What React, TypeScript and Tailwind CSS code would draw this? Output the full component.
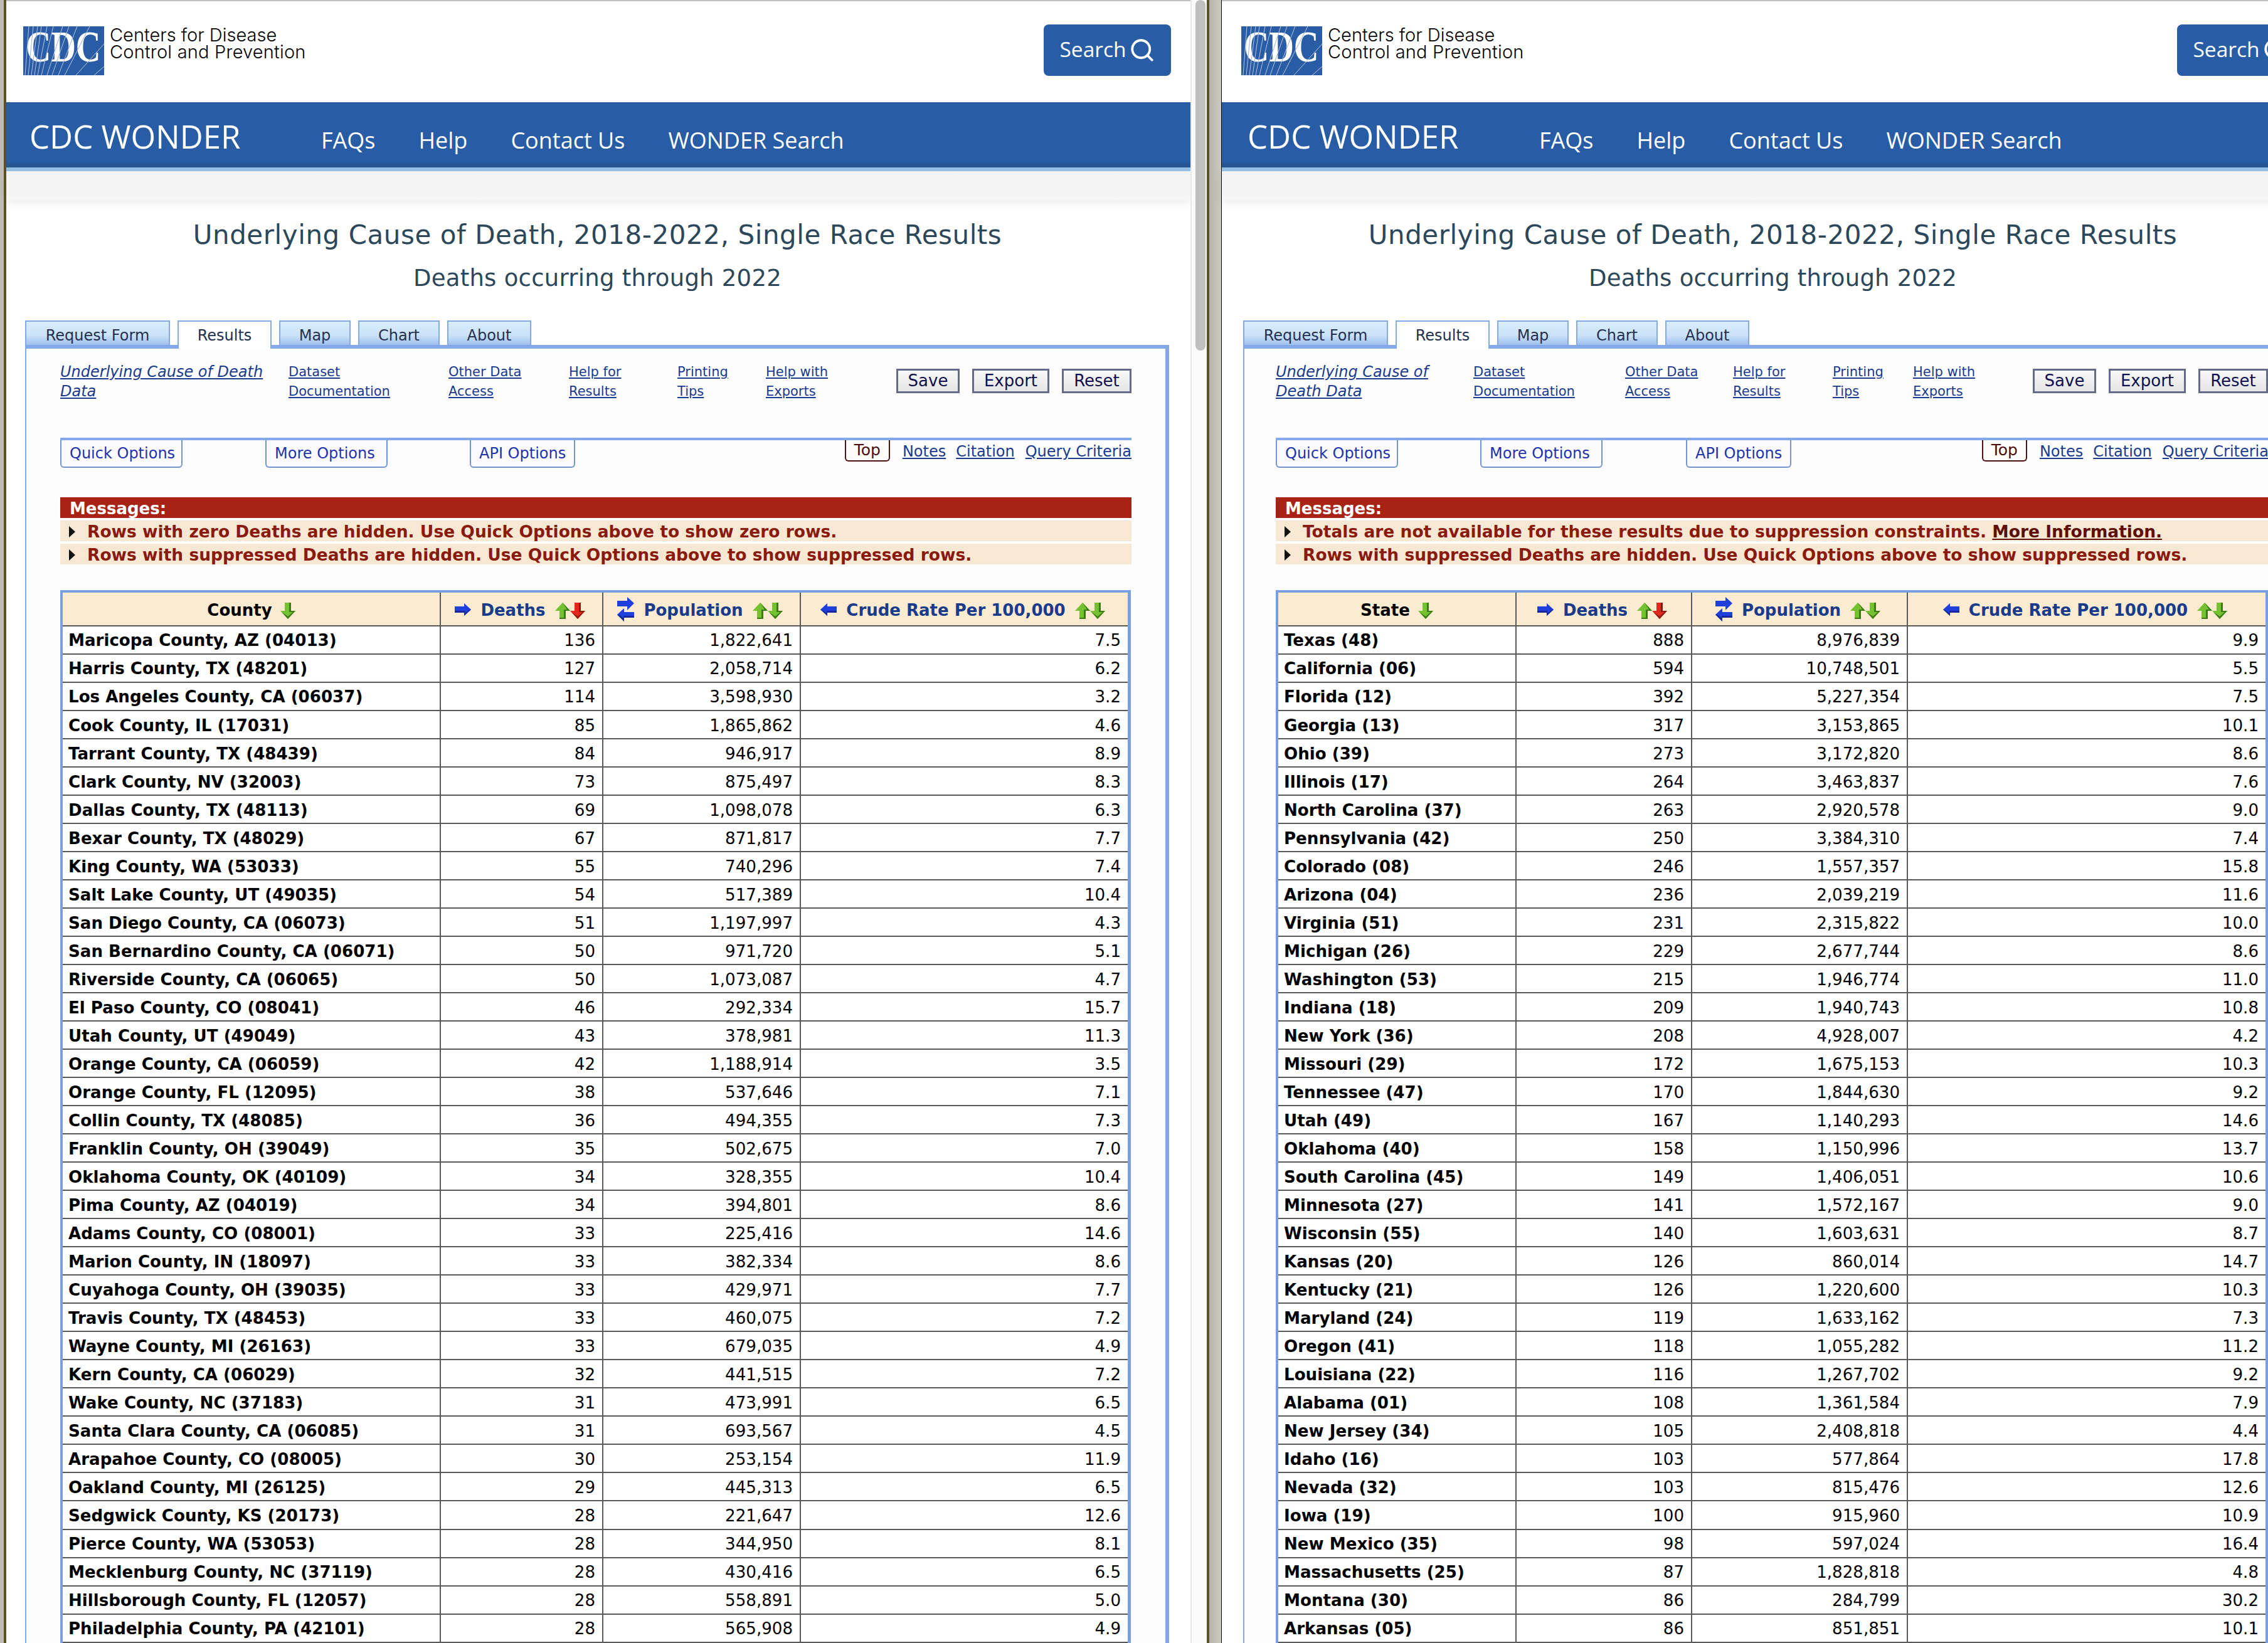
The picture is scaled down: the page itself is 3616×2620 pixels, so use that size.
import type { ReactNode } from 'react'
import { Search } from 'lucide-react'

type Cells = [string, string, string, string]

const countyRows: Cells[] = [
  ['Maricopa County, AZ (04013)', '136', '1,822,641', '7.5'],
  ['Harris County, TX (48201)', '127', '2,058,714', '6.2'],
  ['Los Angeles County, CA (06037)', '114', '3,598,930', '3.2'],
  ['Cook County, IL (17031)', '85', '1,865,862', '4.6'],
  ['Tarrant County, TX (48439)', '84', '946,917', '8.9'],
  ['Clark County, NV (32003)', '73', '875,497', '8.3'],
  ['Dallas County, TX (48113)', '69', '1,098,078', '6.3'],
  ['Bexar County, TX (48029)', '67', '871,817', '7.7'],
  ['King County, WA (53033)', '55', '740,296', '7.4'],
  ['Salt Lake County, UT (49035)', '54', '517,389', '10.4'],
  ['San Diego County, CA (06073)', '51', '1,197,997', '4.3'],
  ['San Bernardino County, CA (06071)', '50', '971,720', '5.1'],
  ['Riverside County, CA (06065)', '50', '1,073,087', '4.7'],
  ['El Paso County, CO (08041)', '46', '292,334', '15.7'],
  ['Utah County, UT (49049)', '43', '378,981', '11.3'],
  ['Orange County, CA (06059)', '42', '1,188,914', '3.5'],
  ['Orange County, FL (12095)', '38', '537,646', '7.1'],
  ['Collin County, TX (48085)', '36', '494,355', '7.3'],
  ['Franklin County, OH (39049)', '35', '502,675', '7.0'],
  ['Oklahoma County, OK (40109)', '34', '328,355', '10.4'],
  ['Pima County, AZ (04019)', '34', '394,801', '8.6'],
  ['Adams County, CO (08001)', '33', '225,416', '14.6'],
  ['Marion County, IN (18097)', '33', '382,334', '8.6'],
  ['Cuyahoga County, OH (39035)', '33', '429,971', '7.7'],
  ['Travis County, TX (48453)', '33', '460,075', '7.2'],
  ['Wayne County, MI (26163)', '33', '679,035', '4.9'],
  ['Kern County, CA (06029)', '32', '441,515', '7.2'],
  ['Wake County, NC (37183)', '31', '473,991', '6.5'],
  ['Santa Clara County, CA (06085)', '31', '693,567', '4.5'],
  ['Arapahoe County, CO (08005)', '30', '253,154', '11.9'],
  ['Oakland County, MI (26125)', '29', '445,313', '6.5'],
  ['Sedgwick County, KS (20173)', '28', '221,647', '12.6'],
  ['Pierce County, WA (53053)', '28', '344,950', '8.1'],
  ['Mecklenburg County, NC (37119)', '28', '430,416', '6.5'],
  ['Hillsborough County, FL (12057)', '28', '558,891', '5.0'],
  ['Philadelphia County, PA (42101)', '28', '565,908', '4.9'],
]

const stateRows: Cells[] = [
  ['Texas (48)', '888', '8,976,839', '9.9'],
  ['California (06)', '594', '10,748,501', '5.5'],
  ['Florida (12)', '392', '5,227,354', '7.5'],
  ['Georgia (13)', '317', '3,153,865', '10.1'],
  ['Ohio (39)', '273', '3,172,820', '8.6'],
  ['Illinois (17)', '264', '3,463,837', '7.6'],
  ['North Carolina (37)', '263', '2,920,578', '9.0'],
  ['Pennsylvania (42)', '250', '3,384,310', '7.4'],
  ['Colorado (08)', '246', '1,557,357', '15.8'],
  ['Arizona (04)', '236', '2,039,219', '11.6'],
  ['Virginia (51)', '231', '2,315,822', '10.0'],
  ['Michigan (26)', '229', '2,677,744', '8.6'],
  ['Washington (53)', '215', '1,946,774', '11.0'],
  ['Indiana (18)', '209', '1,940,743', '10.8'],
  ['New York (36)', '208', '4,928,007', '4.2'],
  ['Missouri (29)', '172', '1,675,153', '10.3'],
  ['Tennessee (47)', '170', '1,844,630', '9.2'],
  ['Utah (49)', '167', '1,140,293', '14.6'],
  ['Oklahoma (40)', '158', '1,150,996', '13.7'],
  ['South Carolina (45)', '149', '1,406,051', '10.6'],
  ['Minnesota (27)', '141', '1,572,167', '9.0'],
  ['Wisconsin (55)', '140', '1,603,631', '8.7'],
  ['Kansas (20)', '126', '860,014', '14.7'],
  ['Kentucky (21)', '126', '1,220,600', '10.3'],
  ['Maryland (24)', '119', '1,633,162', '7.3'],
  ['Oregon (41)', '118', '1,055,282', '11.2'],
  ['Louisiana (22)', '116', '1,267,702', '9.2'],
  ['Alabama (01)', '108', '1,361,584', '7.9'],
  ['New Jersey (34)', '105', '2,408,818', '4.4'],
  ['Idaho (16)', '103', '577,864', '17.8'],
  ['Nevada (32)', '103', '815,476', '12.6'],
  ['Iowa (19)', '100', '915,960', '10.9'],
  ['New Mexico (35)', '98', '597,024', '16.4'],
  ['Massachusetts (25)', '87', '1,828,818', '4.8'],
  ['Montana (30)', '86', '284,799', '30.2'],
  ['Arkansas (05)', '86', '851,851', '10.1'],
]

// rays of the logo, bottom edge to top or right edge
const logoRays = [
  'M3 78 L9 0', 'M8 78 L16 0', 'M13 78 L23 0', 'M18 78 L29 0', 'M23 78 L38 0', 'M29 78 L48 0',
  'M38 78 L63 0', 'M46 78 L73 0', 'M56 78 L86 0', 'M66 78 L106 0', 'M84 78 L129 28', 'M113 78 L129 64',
]

function CdcLogo({ id }: { id: string }) {
  const letters = { x: 64, y: 56, textAnchor: 'middle', fontFamily: "'Liberation Serif', serif", fontWeight: 700, fontSize: 70 } as const
  return (
    <svg width="129" height="78" viewBox="0 0 129 78" className="shrink-0">
      <defs>
        <clipPath id={id}>
          <text {...letters} textLength="119" lengthAdjust="spacingAndGlyphs">CDC</text>
        </clipPath>
      </defs>
      <rect width="129" height="78" fill="#2a5ba5" />
      {logoRays.map((d) => (
        <path key={d} d={d} stroke="#c6d5ea" strokeWidth="0.9" fill="none" />
      ))}
      <text {...letters} fill="#fff" textLength="119" lengthAdjust="spacingAndGlyphs">CDC</text>
      <g clipPath={`url(#${id})`}>
        {logoRays.map((d) => (
          <path key={d} d={d} stroke="#7f9dc9" strokeWidth="0.8" fill="none" />
        ))}
      </g>
    </svg>
  )
}

function BlueArrow({ dir }: { dir: 'left' | 'right' }) {
  return (
    <svg width="26" height="20" viewBox="0 0 26 20" className="shrink-0 mb-[3px]">
      {dir === 'right' ? (
        <>
          <polygon points="0,5 15,5 15,0 26,10 15,20 15,15 0,15" fill="#1f3fdc" />
          <polygon points="0,12 16,12 16,16 24,10 26,10 15,20 15,15 0,15" fill="#14289a" />
        </>
      ) : (
        <>
          <polygon points="26,5 11,5 11,0 0,10 11,20 11,15 26,15" fill="#1f3fdc" />
          <polygon points="26,12 10,12 10,16 2,10 0,10 11,20 11,15 26,15" fill="#14289a" />
        </>
      )}
    </svg>
  )
}

function SwapArrows() {
  return (
    <svg width="27" height="39" viewBox="0 0 27 39" className="shrink-0 mb-[3px]">
      <polygon points="0,6 16,6 16,0 27,10 16,21 16,15 0,15" fill="#1f3fdc" />
      <polygon points="27,24 11,24 11,18 0,28 11,39 11,33 27,33" fill="#1f3fdc" />
      <polygon points="27,30 10,30 10,34 3,28 0,28 11,39 11,33 27,33" fill="#14289a" />
    </svg>
  )
}

function SortArrow({ dir, red }: { dir: 'up' | 'down'; red?: boolean }) {
  const main = red ? '#e0291c' : '#74c22f'
  const dark = red ? '#8f1710' : '#3c7a16'
  return (
    <svg width="24" height="26" viewBox="0 0 24 26" className="shrink-0 mt-[2px]">
      {dir === 'up' ? (
        <>
          <polygon points="12,0 24,13 17,13 17,26 7,26 7,13 0,13" fill={main} />
          <polygon points="12,0 24,13 17,13 17,26 7,26 7,24 14,24 14,11 19,11" fill={dark} />
        </>
      ) : (
        <>
          <polygon points="7,0 17,0 17,13 24,13 12,26 0,13 7,13" fill={main} />
          <polygon points="14,0 17,0 17,13 24,13 12,26 2,15 12,22 20,15 14,15" fill={dark} />
        </>
      )}
    </svg>
  )
}

function Row({ cells, grid }: { cells: Cells; grid: string }) {
  return (
    <div className={`grid ${grid} h-[45.03px] border-b-2 border-[#595959] items-center leading-none text-[26.1px] text-black`}>
      <div className="h-full flex items-center pt-[2px] pl-[9px] font-bold whitespace-nowrap">{cells[0]}</div>
      <div className="h-full flex items-center justify-end pt-[2px] pr-[11px] border-l-2 border-[#595959]">{cells[1]}</div>
      <div className="h-full flex items-center justify-end pt-[2px] pr-[11px] border-l-2 border-[#595959]">{cells[2]}</div>
      <div className="h-full flex items-center justify-end pt-[2px] pr-[11px] border-l-2 border-[#595959]">{cells[3]}</div>
    </div>
  )
}

function DataTable({ label, rows, grid, widthClass }: { label: string; rows: Cells[]; grid: string; widthClass: string }) {
  return (
    <div className={`${widthClass} mt-[41px] border-t-4 border-l-4 border-r-[5px] border-[#7a9fe0] bg-white`}>
      <div className={`grid ${grid} h-[54px] bg-[#fbebd0] border-b-2 border-[#595959] text-[26px] font-bold leading-none text-[#1a3a8a]`}>
        <div className="flex items-center justify-center gap-[13px] pt-[4px] text-black">
          {label}
          <SortArrow dir="down" />
        </div>
        <div className="flex items-center justify-center border-l-2 border-[#595959] pt-[4px] pr-[5px]">
          <BlueArrow dir="right" />
          <span className="ml-[15px] mr-[15px]">Deaths</span>
          <SortArrow dir="up" />
          <SortArrow dir="down" red />
        </div>
        <div className="flex items-center justify-center border-l-2 border-[#595959] pt-[4px] pr-[5px]">
          <SwapArrows />
          <span className="ml-[15px] mr-[15px]">Population</span>
          <SortArrow dir="up" />
          <SortArrow dir="down" />
        </div>
        <div className="flex items-center justify-center border-l-2 border-[#595959] pt-[4px] pr-[5px]">
          <BlueArrow dir="left" />
          <span className="ml-[15px] mr-[15px]">Crude Rate Per 100,000</span>
          <SortArrow dir="up" />
          <SortArrow dir="down" />
        </div>
      </div>
      {rows.map((r) => (
        <Row key={r[0]} cells={r} grid={grid} />
      ))}
    </div>
  )
}

function Message({ children }: { children: ReactNode }) {
  return (
    <div className="h-[33px] mt-[4px] bg-[#f6e8d3] flex items-center pt-[3px] text-[26.5px] leading-none font-bold text-[#8a1a0e] whitespace-nowrap">
      <svg width="10" height="18" viewBox="0 0 10 18" className="ml-[14px] mr-[19px] shrink-0">
        <polygon points="0,0 10,9 0,18" fill="#111" />
      </svg>
      {children}
    </div>
  )
}

function LinkCol({ lines, x, italic }: { lines: string[]; x: string; italic?: boolean }) {
  return (
    <a className={`${x} block leading-[31px] text-[#1a3a8f] underline whitespace-nowrap ${italic ? 'italic text-[24px]' : 'text-[21px]'}`}>
      {lines.map((l) => (
        <div key={l}>{l}</div>
      ))}
    </a>
  )
}

function Tab({ label, width, active }: { label: string; width: string; active?: boolean }) {
  return (
    <div
      className={`${width} h-[45px] flex items-center justify-center border-2 border-b-0 border-[#84a9e8] text-[24px] text-[#24304f] ${
        active ? 'bg-white z-10' : 'bg-gradient-to-b from-[#d9edfb] via-[#cbe2f8] to-[#8fb3ea]'
      }`}
    >
      {label}
    </div>
  )
}

function TabRow({ className }: { className: string }) {
  return (
    <div className={`flex ${className} mt-[42px] gap-[12px]`}>
      <Tab label="Request Form" width="w-[231px]" />
      <Tab label="Results" width="w-[150px]" active />
      <Tab label="Map" width="w-[114px]" />
      <Tab label="Chart" width="w-[130px]" />
      <Tab label="About" width="w-[134px]" />
    </div>
  )
}

function OptionTab({ label, width }: { label: string; width: string }) {
  return (
    <div className={`${width} h-[44px] flex items-center pl-[13px] border-2 border-t-0 border-[#7494cf] rounded-b-md bg-[#fafaff] text-[24px] text-[#2233a8] whitespace-nowrap`}>
      {label}
    </div>
  )
}

function ActionButton({ label, width }: { label: string; width: string }) {
  return (
    <div className={`${width} h-[39px] flex items-center justify-center border-[3px] border-[#666a88] bg-gradient-to-b from-[#f7f7f7] to-[#e6e6e6] text-[26px] text-[#10104f]`}>
      {label}
    </div>
  )
}

function ActionButtons() {
  return (
    <div className="flex gap-[20px] mt-[10px]">
      <ActionButton label="Save" width="w-[101px]" />
      <ActionButton label="Export" width="w-[123px]" />
      <ActionButton label="Reset" width="w-[111px]" />
    </div>
  )
}

function PageLinks() {
  return (
    <div className="ml-auto flex items-start text-[24px] text-[#1a3a8f] whitespace-nowrap">
      <div className="w-[72px] h-[34px] flex items-center justify-center border-2 border-t-0 border-[#4c0f0f] rounded-b-md bg-[#fffdfa] text-[25px] text-[#4a0d0d]">Top</div>
      <a className="ml-[20px] underline">Notes</a>
      <a className="ml-[16px] underline">Citation</a>
      <a className="ml-[17px] underline">Query Criteria</a>
    </div>
  )
}

function SiteHeader({ logoPad, navPad, titlePad, logoId }: { logoPad: string; navPad: string; titlePad: string; logoId: string }) {
  return (
    <>
      <div className="h-[2px] bg-[#c0c0c0]" />
      <div className={`h-[161px] flex items-start justify-between ${logoPad} pr-[31px] bg-white`}>
        <div className="flex mt-[40px]">
          <CdcLogo id={logoId} />
          <div className="ml-[9px] text-[29px] leading-[27px] text-black font-['Inter',sans-serif] font-light whitespace-nowrap">
            <div>Centers for Disease</div>
            <div className="tracking-[0.2px]">Control and Prevention</div>
          </div>
        </div>
        <div className="mt-[37px] w-[203px] h-[82px] rounded-lg bg-[#285ca5] flex items-center justify-center gap-[4px] text-[33.5px] text-white font-['Open_Sans',sans-serif]">
          <span className="pb-[4px]">Search</span>
          <Search size={42} strokeWidth={2.2} />
        </div>
      </div>
      <div className={`h-[104px] bg-gradient-to-b from-[#285ca5] from-90% to-[#26538f] flex ${navPad} text-white font-['Open_Sans',sans-serif]`}>
        <div className="mt-[19px] text-[51px] leading-[70px] w-[465px] whitespace-nowrap">CDC WONDER</div>
        <div className="mt-[36px] flex gap-[69px] text-[36px] leading-[50px] whitespace-nowrap">
          <span>FAQs</span>
          <span>Help</span>
          <span>Contact Us</span>
          <span>WONDER Search</span>
        </div>
      </div>
      <div className="h-[6px] bg-[#96c0e4]" />
      <div className="h-[46px] bg-gradient-to-b from-[#f4f4f4] from-80% to-[#f7f7f7] shadow-[0_6px_14px_rgba(0,0,0,0.07)]" />
      <div className={`mt-[31px] ${titlePad} text-center text-[#2b4759] whitespace-nowrap`}>
        <div className="text-[42px] leading-[50px] tracking-[0.55px]">Underlying Cause of Death, 2018-2022, Single Race Results</div>
        <div className="mt-[19px] text-[37px] leading-[50px] tracking-[0.25px]">Deaths occurring through 2022</div>
      </div>
    </>
  )
}

export default function App() {
  const leftGrid = 'grid-cols-[601px_259px_315px_1fr]'
  const rightGrid = 'grid-cols-[378px_280px_344px_1fr]'
  const messagesBar = (
    <div className="h-[33px] bg-[#a82215] flex items-center pl-[15px] pt-[2px] text-[26px] leading-none font-bold text-white">Messages:</div>
  )

  return (
    <div className="flex w-[3616px] h-[2620px] overflow-hidden bg-white font-['DejaVu_Sans',sans-serif]">
      {/* Left window */}
      <div className="w-[6px] shrink-0 bg-[#bdbdb5]" />
      <div className="w-[4px] shrink-0 bg-[#5a5424]" />
      <div className="w-[1888px] shrink-0 flex flex-col">
        <SiteHeader logoPad="pl-[27px]" navPad="pl-[37px]" titlePad="pr-[3px]" logoId="logo-left" />
        <TabRow className="pl-[30px]" />
        <div className="ml-[30px] w-[1824px] flex-1 -mt-[6px] border-t-[6px] border-l-2 border-r-[6px] border-[#84a9e8] bg-[#fdfdfe] pl-[54px] pr-[54px]">
          <div className="flex items-start h-[142px] pt-[22px]">
            <LinkCol x="w-[364px]" italic lines={['Underlying Cause of Death', 'Data']} />
            <LinkCol x="w-[255px]" lines={['Dataset', 'Documentation']} />
            <LinkCol x="w-[192px]" lines={['Other Data', 'Access']} />
            <LinkCol x="w-[173px]" lines={['Help for', 'Results']} />
            <LinkCol x="w-[141px]" lines={['Printing', 'Tips']} />
            <LinkCol x="w-[208px]" lines={['Help with', 'Exports']} />
            <ActionButtons />
          </div>
          <div className="h-[4px] bg-[#84a9e8]" />
          <div className="flex items-start h-[91px]">
            <OptionTab label="Quick Options" width="w-[195px] mr-[132px]" />
            <OptionTab label="More Options" width="w-[195px] mr-[131px]" />
            <OptionTab label="API Options" width="w-[168px]" />
            <PageLinks />
          </div>
          {messagesBar}
          <Message>Rows with zero Deaths are hidden. Use Quick Options above to show zero rows.</Message>
          <Message>Rows with suppressed Deaths are hidden. Use Quick Options above to show suppressed rows.</Message>
          <DataTable label="County" rows={countyRows} grid={leftGrid} widthClass="w-[1707px]" />
        </div>
      </div>
      {/* Scrollbar of the left window */}
      <div className="w-[26px] shrink-0 border-l-2 border-[#e8e8e8] bg-[#fafafa] relative">
        <div className="absolute left-[6px] top-0 w-[16px] h-[559px] rounded-full bg-[#c0c0c0]" />
      </div>
      {/* Divider */}
      <div className="w-[4px] shrink-0 bg-[#5a5424]" />
      <div className="w-[19px] shrink-0 bg-gradient-to-r from-[#b4b4ac] to-[#cbcbc2]" />
      <div className="w-[1px] shrink-0 bg-black" />

      {/* Right window */}
      <div className="w-[1757px] shrink-0 flex flex-col">
        <SiteHeader logoPad="pl-[31px]" navPad="pl-[41px]" titlePad="" logoId="logo-right" />
        <TabRow className="pl-[34px]" />
        <div className="ml-[34px] w-[1689px] flex-1 -mt-[6px] border-t-[6px] border-l-2 border-r-[6px] border-[#84a9e8] bg-[#fdfdfe] pl-[50px] pr-[48px]">
          <div className="flex items-start h-[142px] pt-[22px]">
            <LinkCol x="w-[315px]" italic lines={['Underlying Cause of', 'Death Data']} />
            <LinkCol x="w-[242px]" lines={['Dataset', 'Documentation']} />
            <LinkCol x="w-[172px]" lines={['Other Data', 'Access']} />
            <LinkCol x="w-[159px]" lines={['Help for', 'Results']} />
            <LinkCol x="w-[128px]" lines={['Printing', 'Tips']} />
            <LinkCol x="w-[191px]" lines={['Help with', 'Exports']} />
            <ActionButtons />
          </div>
          <div className="h-[4px] bg-[#84a9e8]" />
          <div className="flex items-start h-[91px]">
            <OptionTab label="Quick Options" width="w-[195px] mr-[131px]" />
            <OptionTab label="More Options" width="w-[195px] mr-[133px]" />
            <OptionTab label="API Options" width="w-[168px]" />
            <PageLinks />
          </div>
          {messagesBar}
          <Message>
            Totals are not available for these results due to suppression constraints.&nbsp;
            <a className="underline text-[#5e0e06]">More Information.</a>
          </Message>
          <Message>Rows with suppressed Deaths are hidden. Use Quick Options above to show suppressed rows.</Message>
          <DataTable label="State" rows={stateRows} grid={rightGrid} widthClass="w-[1583px]" />
        </div>
      </div>
    </div>
  )
}
